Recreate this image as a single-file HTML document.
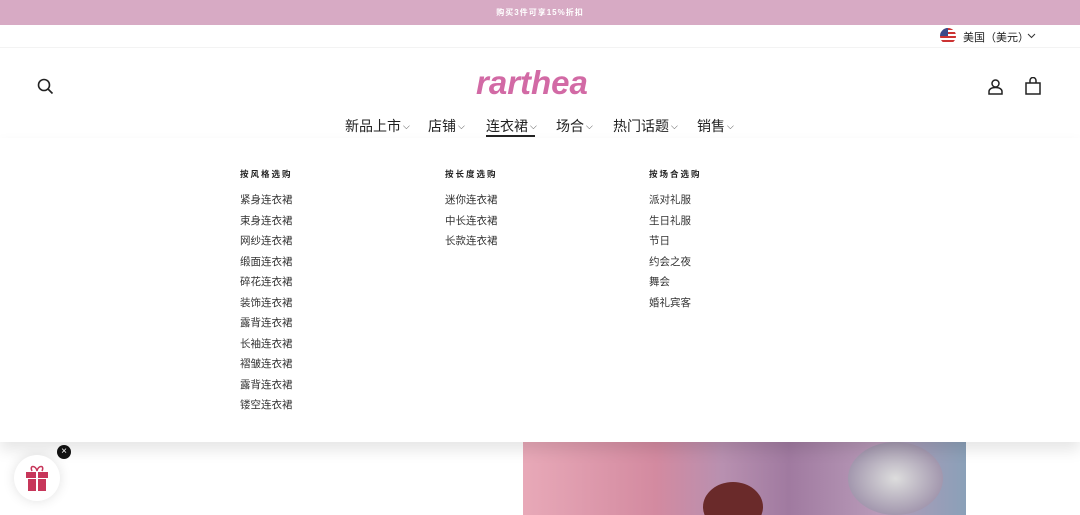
<!DOCTYPE html>
<html style="overflow:hidden;width:1080px;height:515px"><head><meta charset="utf-8"><style>
body{margin:0;width:1080px;height:515px;overflow:hidden;background:#fff;font-family:"Liberation Sans","Noto Sans CJK SC",sans-serif;color:#222;position:relative}
.ban{position:absolute;left:0;top:0;width:1080px;height:25px;background:#d7aac4;color:#fff;font-size:8px;font-weight:bold;letter-spacing:1px;text-align:center;line-height:25px}
.a{position:absolute}
.nav span{position:absolute;top:116px;font-size:14px;color:#222}
.nav i{font-style:normal;font-size:9px;color:#444;margin-left:2px;vertical-align:2px}
.panel{position:absolute;left:0;top:138px;width:1080px;height:304px;background:#fff;box-shadow:0 8px 14px rgba(0,0,0,.1);z-index:2}
.col{position:absolute;top:30px;font-size:10.5px;line-height:20.5px;color:#333}
.col b{display:block;font-size:8.5px;letter-spacing:2px;margin-bottom:10px;line-height:12px;color:#222}
.img{position:absolute;left:523px;top:442px;width:443px;height:73px;overflow:hidden;background:linear-gradient(90deg,#e8a9b8 0,#d38aa0 30%,#b890b0 45%,#a07aa0 60%,#b89ab8 80%,#8aa0b8 100%)}
</style></head><body>
<div class="ban">购买3件可享15%折扣</div>
<div class="a" style="top:47px;left:0;width:1080px;height:1px;background:#f3f3f3"></div>
<div class="a" style="left:940px;top:28px;width:16px;height:16px;border-radius:50%;background:repeating-linear-gradient(#c33 0 2px,#fff 2px 4px);overflow:hidden"><div style="width:8px;height:8px;background:#3a4a8a"></div></div>
<div class="a" style="left:963px;top:29px;font-size:11px">美国（美元）</div>
<svg class="a" style="left:1027px;top:33px" width="9" height="6"><path d="M1 1l3.5 3.5L8 1" stroke="#333" fill="none"/></svg>
<svg class="a" style="left:37px;top:78px" width="17" height="17"><circle cx="7" cy="7" r="5.5" stroke="#222" stroke-width="1.6" fill="none"/><path d="M11 11l4.5 4.5" stroke="#222" stroke-width="1.6"/></svg>
<div class="a" style="left:476px;top:64px;font-size:33px;font-style:italic;font-weight:bold;color:#d26aa5;letter-spacing:0px;font-family:'Liberation Sans',sans-serif">rarthea</div>
<svg class="a" style="left:987px;top:78px" width="17" height="17"><circle cx="8.5" cy="5.5" r="3.5" stroke="#222" stroke-width="1.5" fill="none"/><path d="M2 16v-2.5c0-2 2-4 6.5-4s6.5 2 6.5 4V16z" stroke="#222" stroke-width="1.5" fill="none"/></svg>
<svg class="a" style="left:1024px;top:77px" width="18" height="18"><path d="M2 6h14v11H2z M6 6V3.5a3 3 0 0 1 6 0V6" stroke="#222" stroke-width="1.5" fill="none"/></svg>
<div class="nav">
<span style="left:345px">新品上市<i>⌵</i></span><span style="left:428px">店铺<i>⌵</i></span><span style="left:486px">连衣裙<i>⌵</i></span><span style="left:556px">场合<i>⌵</i></span><span style="left:613px">热门话题<i>⌵</i></span><span style="left:697px">销售<i>⌵</i></span>
</div>
<div class="a" style="left:486px;top:135px;width:49px;height:2px;background:#222;z-index:3"></div>
<div class="panel">
<div class="col" style="left:240px"><b>按风格选购</b>紧身连衣裙<br>束身连衣裙<br>网纱连衣裙<br>缎面连衣裙<br>碎花连衣裙<br>装饰连衣裙<br>露背连衣裙<br>长袖连衣裙<br>褶皱连衣裙<br>露背连衣裙<br>镂空连衣裙</div>
<div class="col" style="left:445px"><b>按长度选购</b>迷你连衣裙<br>中长连衣裙<br>长款连衣裙</div>
<div class="col" style="left:649px"><b>按场合选购</b>派对礼服<br>生日礼服<br>节日<br>约会之夜<br>舞会<br>婚礼宾客</div>
</div>
<div class="img"><div style="position:absolute;left:325px;top:0;width:95px;height:73px;border-radius:50%;background:radial-gradient(#ddd,#8a7a9a)"></div><div style="position:absolute;left:180px;top:40px;width:60px;height:50px;border-radius:50%;background:#6a2a2a"></div></div>
<div class="a" style="left:14px;top:455px;width:46px;height:46px;border-radius:50%;background:#fff;box-shadow:0 0 12px rgba(0,0,0,.12);z-index:3"><svg style="position:absolute;left:11px;top:9px" width="24" height="28"><path d="M7 7c-3-6 4-6 5 0c1-6 8-6 5 0" stroke="#c7365a" stroke-width="1.5" fill="none"/><rect x="1" y="8" width="22" height="6" fill="#c7365a"/><rect x="3" y="15" width="18" height="12" fill="#c7365a"/><rect x="11" y="8" width="2" height="19" fill="#fff"/></svg></div>
<div class="a" style="left:57px;top:445px;width:14px;height:14px;border-radius:50%;background:#111;color:#fff;font-size:10px;line-height:14px;text-align:center;z-index:4">×</div>
</body></html>
